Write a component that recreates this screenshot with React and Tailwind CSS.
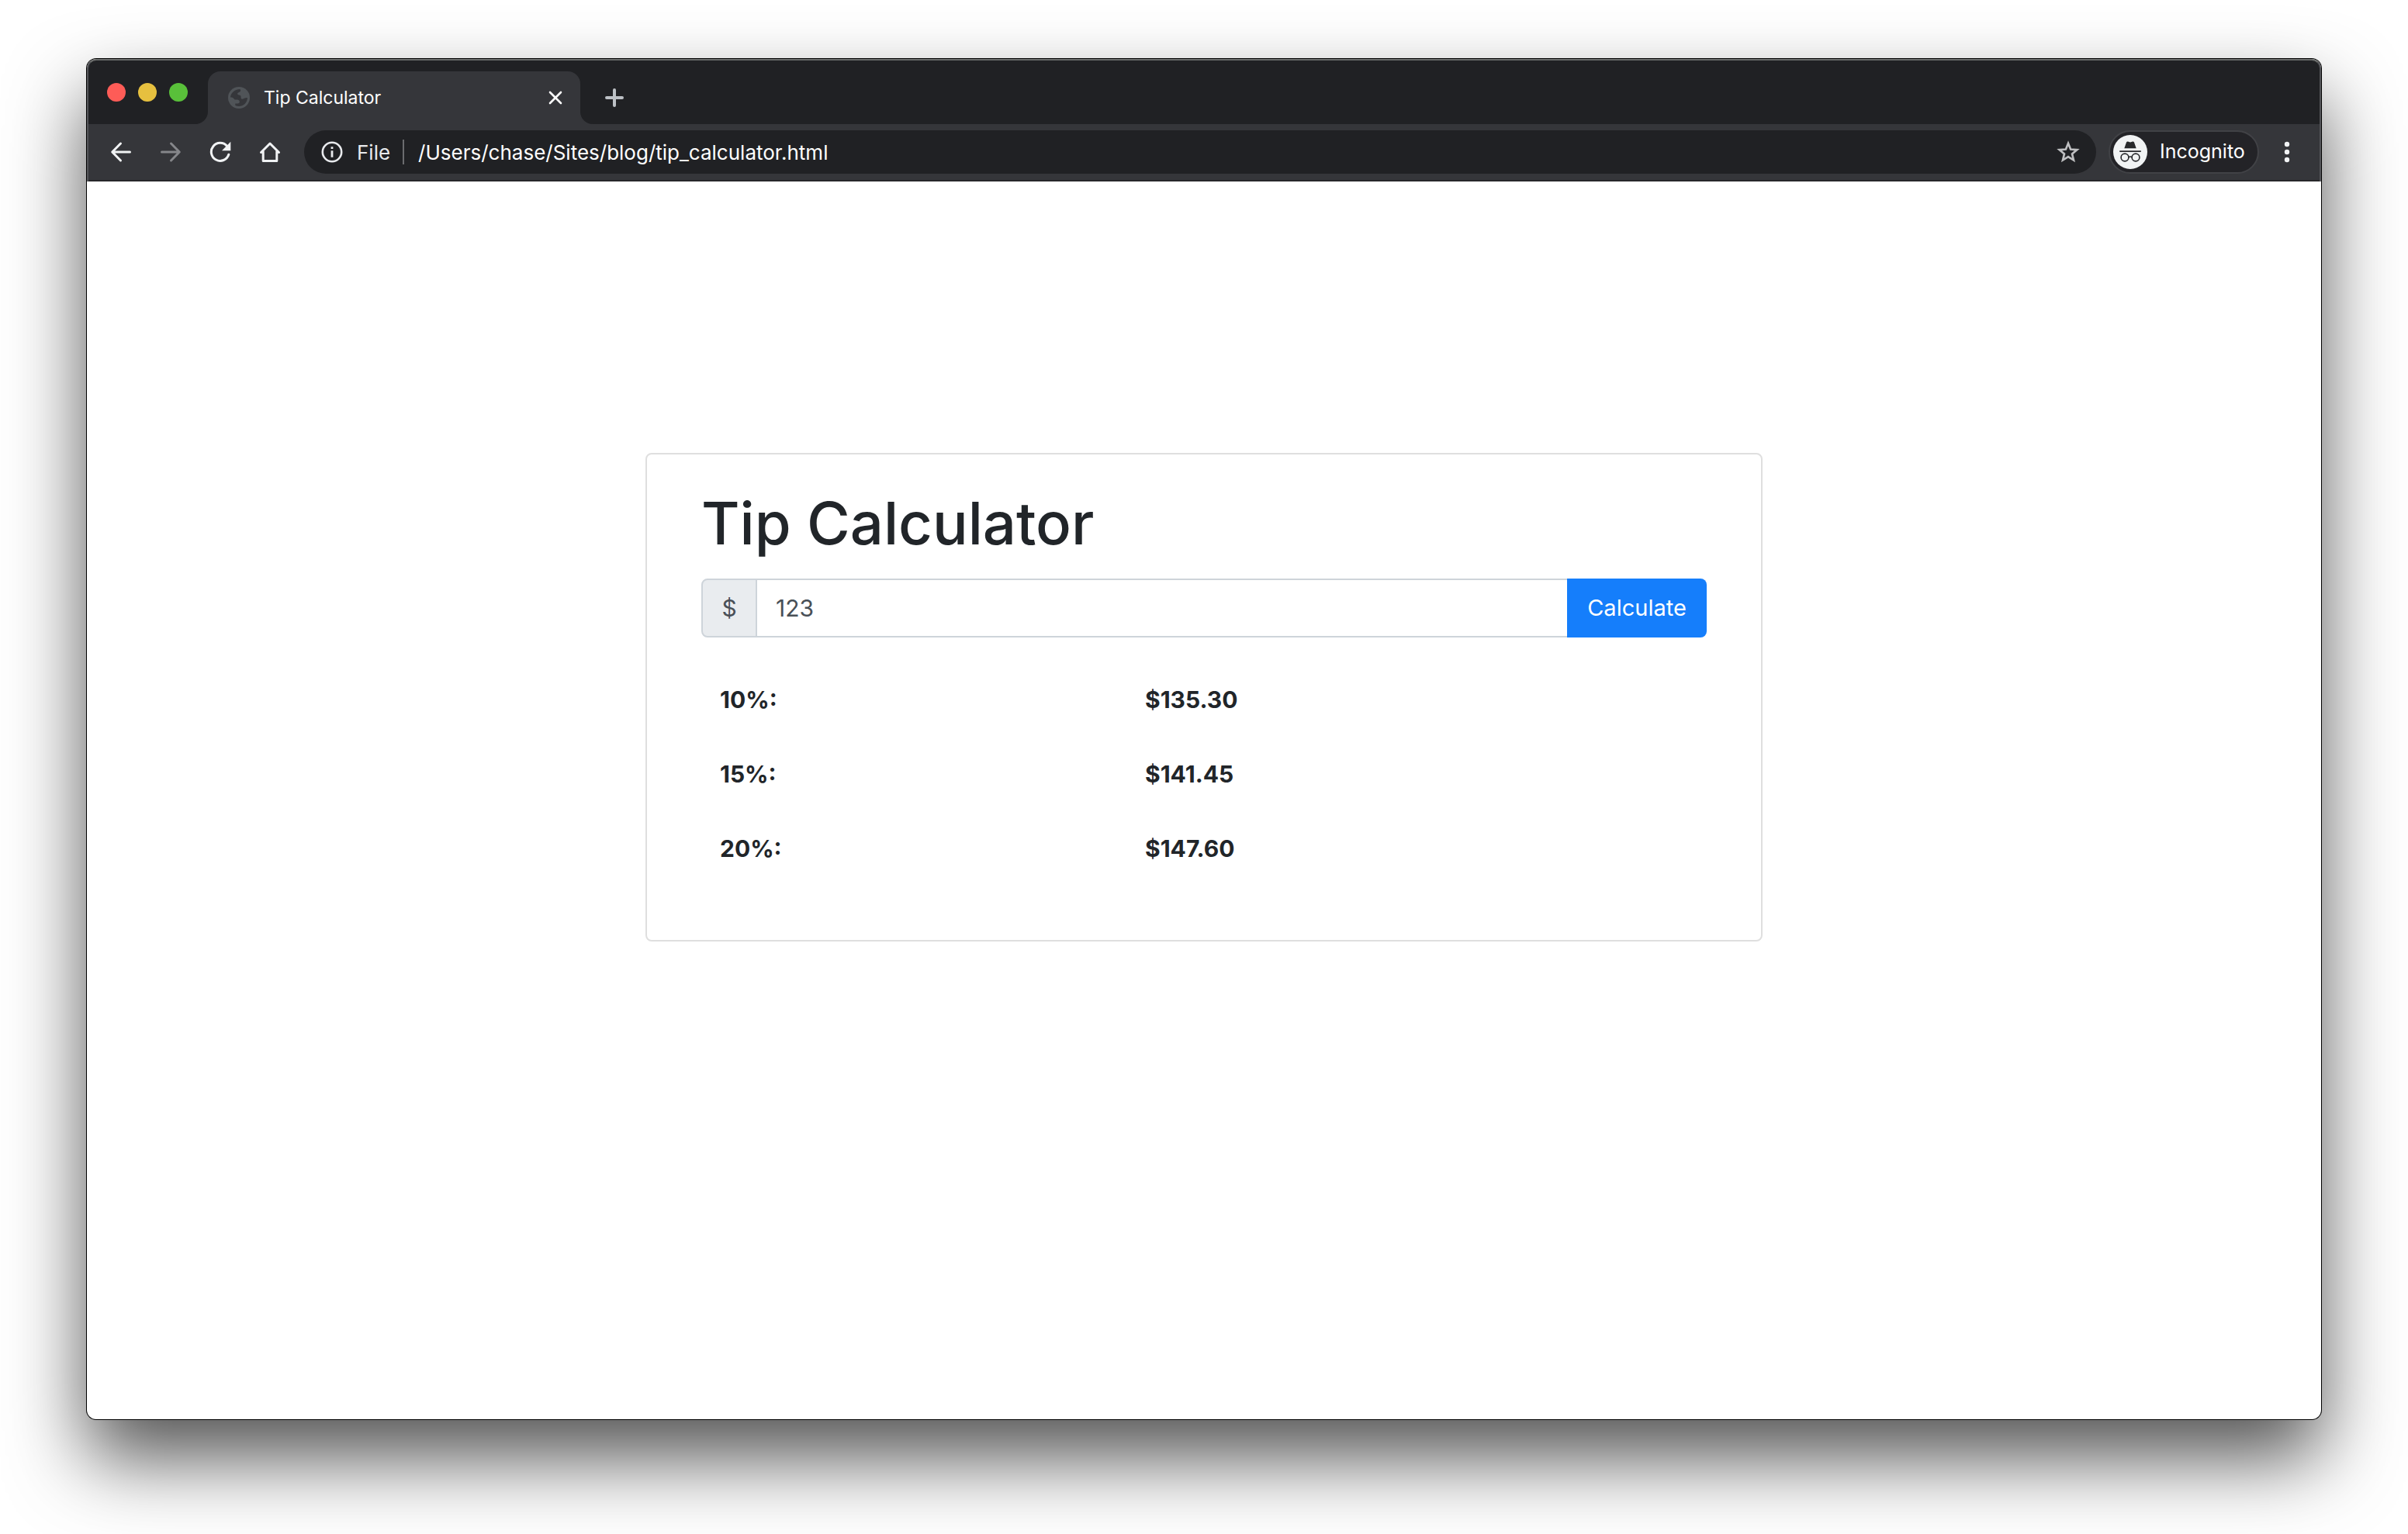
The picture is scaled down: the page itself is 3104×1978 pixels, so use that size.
import { useState } from "react";

const RATES = [10, 15, 20];

const trafficLights = [
  { label: "Close window", color: "bg-[#fe5c57]" },
  { label: "Minimize window", color: "bg-[#e6c03f]" },
  { label: "Zoom window", color: "bg-[#59c03a]" },
];

function GlobeIcon() {
  return (
    <svg className="size-7" viewBox="0 0 28 28" aria-hidden="true">
      <circle cx="14" cy="14" r="14" fill="#505458" />
      <path
        fill="#35363a"
        d="M3 13.500C3.200 8.500 8 3.200 15.500 3c1.300 1.800.4 3.300-1.300 3.900-1.700.6-2.500 1.300-1.900 2.600.7 1.300 2.700.6 3.700 1.700 1.300 1.500-.2 3.300 1.500 4.300 1.700.9 3.200-1.500 7.500-1.500-.2 6.500-5.200 11-11 11-1.800 0-3.300-.4-4.700-1.100v-2.400h3.200c1.700 0 2.300-1 2.300-2.400 0-1.700-1.300-2.600-3-2.600H9.500c-1.300 0-1.800-1-2.500-1.800-.7-.8-2-1.200-4-1.200z"
      />
    </svg>
  );
}

function CloseIcon() {
  return (
    <svg className="size-5" viewBox="0 0 20 20" fill="none" stroke="#fff" strokeWidth="2.600" strokeLinecap="round" aria-hidden="true">
      <path d="M3 3l14 14M17 3L3 17" />
    </svg>
  );
}

function PlusIcon() {
  return (
    <svg className="size-6" viewBox="0 0 24 24" fill="none" stroke="#bdc1c6" strokeWidth="4" strokeLinecap="round" aria-hidden="true">
      <path d="M12 2v20M2 12h20" />
    </svg>
  );
}

function ArrowIcon({ forward }) {
  return (
    <svg className="size-7" viewBox="0 0 28 28" fill="none" stroke={forward ? "#85868a" : "#f1f3f4"} strokeWidth="3" strokeLinecap="round" strokeLinejoin="round" aria-hidden="true">
      <path d={forward ? "M2.500 14H25M14.500 3L25.300 14 14.500 25" : "M25.500 14H3M13.500 3L2.700 14l10.800 11"} />
    </svg>
  );
}

function ReloadIcon() {
  return (
    <svg className="size-7" viewBox="0 0 28 28" aria-hidden="true">
      <path fill="none" stroke="#f1f3f4" strokeWidth="3" strokeLinecap="round" d="M22.500 6.300A11.500 11.500 0 1 0 24.800 17.300" />
      <path fill="#f1f3f4" d="M27.300 .8v11.400H16z" />
    </svg>
  );
}

function HomeIcon() {
  return (
    <svg className="size-7" viewBox="0 0 28 28" fill="none" stroke="#f1f3f4" strokeWidth="3" strokeLinecap="round" strokeLinejoin="round" aria-hidden="true">
      <path d="M2.500 14.500L14 3l11.500 11.500M5.200 13v12.500h17.600V13" />
    </svg>
  );
}

function InfoIcon() {
  return (
    <svg className="size-7" viewBox="0 0 28 28" aria-hidden="true">
      <circle cx="14" cy="14" r="12.200" fill="none" stroke="#e8eaed" strokeWidth="2.600" />
      <path fill="#e8eaed" d="M12.600 7.300h2.800v2.800h-2.800zM12.600 12.200h2.800v8.500h-2.800z" />
    </svg>
  );
}

function StarIcon() {
  return (
    <svg className="size-8" viewBox="0 0 32 32" fill="none" stroke="#bebfc1" strokeWidth="2.600" aria-hidden="true">
      <path d="M16 4.800l3.100 7.700 8.300.6-6.400 5.300 2 8.100-7-4.400-7 4.400 2-8.100-6.400-5.300 8.300-.6z" />
    </svg>
  );
}

function IncognitoIcon() {
  return (
    <svg className="size-11" viewBox="0 0 44 44" aria-hidden="true">
      <circle cx="22" cy="22" r="22" fill="#f1f3f4" />
      <path fill="#28292c" d="M14.300 17.200L17 9.600c.3-.9 1.100-1.300 2-1.100l3 .9 3-.9c.9-.2 1.700.2 2 1.100l2.700 7.600z" />
      <path fill="#28292c" d="M8.200 20.200h27.600v1.900H8.200z" />
      <g fill="none" stroke="#28292c" strokeWidth="1.600">
        <circle cx="15" cy="29" r="4.900" />
        <circle cx="29" cy="29" r="4.900" />
        <path d="M19.800 28.600c1.400-.8 3-.8 4.400 0" />
      </g>
    </svg>
  );
}

function MenuIcon() {
  return (
    <svg className="h-7 w-2" viewBox="0 0 8 28" fill="#f1f3f4" aria-hidden="true">
      <circle cx="4" cy="4" r="3.200" />
      <circle cx="4" cy="14" r="3.200" />
      <circle cx="4" cy="24" r="3.200" />
    </svg>
  );
}

function TabFoot({ flip }) {
  return (
    <svg className={flip ? "size-4 -scale-x-100" : "size-4"} viewBox="0 0 16 16" fill="#35363a" aria-hidden="true">
      <path d="M16 0v16H0C8.800 16 16 8.800 16 0z" />
    </svg>
  );
}

function TabStrip() {
  return (
    <div className="flex h-[82px] items-end">
      <div className="flex h-full w-[138px] items-center gap-4 pl-6">
        {trafficLights.map((light) => (
          <button key={light.label} aria-label={light.label} className={`size-6 shrink-0 rounded-full ${light.color}`} />
        ))}
      </div>
      <TabFoot />
      <div className="flex h-[68px] w-[480px] items-center rounded-t-2xl bg-[#35363a] pr-[22px] pl-[26px]">
        <button className="flex flex-1 items-center gap-[18px] text-[23px] text-white">
          <GlobeIcon />
          Tip Calculator
        </button>
        <button aria-label="Close tab">
          <CloseIcon />
        </button>
      </div>
      <TabFoot flip />
      <button aria-label="New tab" className="mb-[22px] ml-4">
        <PlusIcon />
      </button>
    </div>
  );
}

function Toolbar() {
  return (
    <div className="flex h-[74px] items-center border-b-2 border-[#27272a] bg-[#35363a] pr-[38px] pl-7">
      <nav className="flex items-center gap-9" aria-label="Browser navigation">
        <button aria-label="Back"><ArrowIcon /></button>
        <button aria-label="Forward"><ArrowIcon forward /></button>
        <button aria-label="Reload"><ReloadIcon /></button>
        <button aria-label="Home"><HomeIcon /></button>
      </nav>
      <div className="ml-[30px] flex h-14 flex-1 items-center rounded-full bg-[#202124] pr-5 pl-[22px] text-[26px]">
        <button className="flex items-center gap-[18px] text-[#e8eaed]">
          <InfoIcon />
          File
        </button>
        <span className="mr-[18px] ml-4 h-8 w-0.5 bg-[#6b6c6f]" />
        <input
          aria-label="Address"
          defaultValue="/Users/chase/Sites/blog/tip_calculator.html"
          className="min-w-0 flex-1 bg-transparent text-white outline-none"
        />
        <button aria-label="Bookmark this page"><StarIcon /></button>
      </div>
      <button className="ml-4 flex h-14 w-[194px] items-center gap-4 rounded-full border-2 border-[#414246] bg-[#232327] pl-1 text-[25px] text-white">
        <IncognitoIcon />
        Incognito
      </button>
      <button aria-label="Menu" className="ml-8"><MenuIcon /></button>
    </div>
  );
}

function TipCalculator() {
  const [amount, setAmount] = useState("123");
  const [bill, setBill] = useState(123);

  const submit = (event) => {
    event.preventDefault();
    setBill(Number(amount) || 0);
  };

  return (
    <section className="w-1/2 rounded-lg border-2 border-[#dfdfdf] bg-white px-[70px] pt-10 pb-[70px] text-[#212529]">
      <h1 className="mb-6 text-[76px] leading-[96px] font-medium">Tip Calculator</h1>
      <form onSubmit={submit} className="flex h-[76px] text-[30px]">
        <label htmlFor="bill" className="flex w-[72px] items-center justify-center rounded-l-lg border-2 border-[#ced4da] bg-[#e9ecef] text-[#495057]">
          $
        </label>
        <input
          id="bill"
          value={amount}
          onChange={(event) => setAmount(event.target.value)}
          className="min-w-0 flex-1 border-y-2 border-[#ced4da] px-6 text-[#495057] outline-none"
        />
        <button type="submit" className="w-[180px] rounded-r-lg bg-[#157efb] text-[29px] text-white">
          Calculate
        </button>
      </form>
      <table className="mt-8 w-full table-fixed text-left text-[30px] leading-[48px]">
        <tbody>
          {RATES.map((rate) => (
            <tr key={rate}>
              <th scope="row" className="w-[548px] p-6 font-bold">{rate}%:</th>
              <td className="p-6 font-bold">${(bill * (1 + rate / 100)).toFixed(2)}</td>
            </tr>
          ))}
        </tbody>
      </table>
    </section>
  );
}

export default function App() {
  return (
    <div className="flex min-h-screen flex-col overflow-hidden bg-white px-28 pt-[76px] pb-[148px] font-['Inter',sans-serif]">
      <div className="flex flex-1 flex-col rounded-xl bg-white shadow-[0_0_0_1px_#000,0_50px_100px_rgba(0,0,0,0.68)]">
        <header className="overflow-hidden rounded-t-xl border-x-2 border-t-2 border-x-[#55565a] border-t-[#6a6c6b] bg-[#202124]">
          <TabStrip />
          <Toolbar />
        </header>
        <main className="flex flex-1 flex-col items-center pt-[350px]">
          <TipCalculator />
        </main>
      </div>
    </div>
  );
}
